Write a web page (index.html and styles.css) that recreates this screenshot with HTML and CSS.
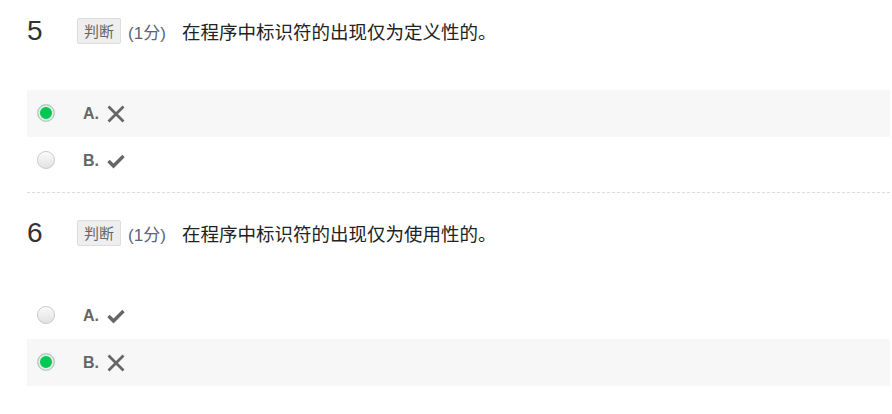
FILE: index.html
```html
<!DOCTYPE html>
<html lang="zh-CN">
<head>
    <meta charset="UTF-8">
    <meta name="viewport" content="width=device-width, initial-scale=1.0">
    <title>判断题</title>
    <link rel="stylesheet" href="styles.css">
</head>
<body>
    <div class="paper">
        <div class="question">
            <div class="q-head">
                <span class="q-num">5</span>
                <span class="q-type">判断</span>
                <span class="q-score">(1分)</span>
                <span class="q-text">在程序中标识符的出现仅为定义性的。</span>
            </div>
            <ul class="options">
                <li class="option checked">
                    <span class="radio"></span>
                    <span class="opt-label">A.</span>
                    <svg class="icon" width="18" height="18" viewBox="0 0 18 18"><path d="M1.5 1.5 L16.5 16.5 M16.5 1.5 L1.5 16.5" stroke="#666" stroke-width="2.8" fill="none"/></svg>
                </li>
                <li class="option">
                    <span class="radio"></span>
                    <span class="opt-label">B.</span>
                    <svg class="icon" width="18" height="18" viewBox="0 0 18 18"><path d="M1.5 9 L6.5 14 L16.5 4" stroke="#666" stroke-width="3.4" fill="none"/></svg>
                </li>
            </ul>
        </div>

        <div class="question">
            <div class="q-head">
                <span class="q-num">6</span>
                <span class="q-type">判断</span>
                <span class="q-score">(1分)</span>
                <span class="q-text">在程序中标识符的出现仅为使用性的。</span>
            </div>
            <ul class="options">
                <li class="option">
                    <span class="radio"></span>
                    <span class="opt-label">A.</span>
                    <svg class="icon" width="18" height="18" viewBox="0 0 18 18"><path d="M1.5 9 L6.5 14 L16.5 4" stroke="#666" stroke-width="3.4" fill="none"/></svg>
                </li>
                <li class="option checked">
                    <span class="radio"></span>
                    <span class="opt-label">B.</span>
                    <svg class="icon" width="18" height="18" viewBox="0 0 18 18"><path d="M1.5 1.5 L16.5 16.5 M16.5 1.5 L1.5 16.5" stroke="#666" stroke-width="2.8" fill="none"/></svg>
                </li>
            </ul>
        </div>
    </div>
</body>
</html>
```
FILE: styles.css
```css
body {
    margin: 0;
    font-family: 'Liberation Sans', Arial, 'Noto Sans CJK SC', sans-serif;
    color: #333;
    background: #fff;
}

.paper {
    margin: 0 2px 0 27px;
}

.question {
    padding-top: 18px;
}

.question + .question {
    padding-top: 27px;
}

.question:first-child {
    border-bottom: 1px dashed #ddd;
    padding-bottom: 8px;
}

.q-head {
    display: flex;
    align-items: center;
    height: 26px;
}

.q-num {
    width: 50px;
    font-size: 28px;
    color: #333;
    line-height: 26px;
}

.q-type {
    display: inline-block;
    height: 24px;
    line-height: 24px;
    padding: 0 6px;
    font-size: 15px;
    color: #666;
    background: #eee;
    border: 1px solid #ddd;
    border-radius: 2px;
    font-family: 'Noto Sans CJK SC', sans-serif;
}

.q-score {
    margin-left: 7px;
    width: 54px;
    font-size: 17px;
    color: #5b6577;
    font-family: 'Liberation Sans', 'Noto Sans CJK SC', sans-serif;
}

.q-text {
    font-size: 18.5px;
    color: #222;
    font-family: 'Noto Sans CJK SC', sans-serif;
}

.options {
    list-style: none;
    margin: 46px 0 0 0;
    padding: 0;
}

.option {
    display: flex;
    align-items: center;
    height: 47px;
    padding-left: 10px;
}

.option.checked {
    background: #f7f7f7;
}

.radio {
    width: 16px;
    height: 16px;
    margin-bottom: 2px;
    border-radius: 50%;
    border: 1px solid #c8c8c8;
    background: linear-gradient(#fafafa, #e2e2e2);
    box-shadow: inset 0 1px 1px rgba(255, 255, 255, 0.8);
}

.checked .radio {
    background: #00c853;
    border: 1px solid #ccc;
    box-shadow: inset 0 0 0 2px #e8e8e8;
}

.opt-label {
    margin-left: 28px;
    font-size: 16px;
    font-weight: bold;
    color: #666;
}

.icon {
    margin-left: 8px;
}
```
